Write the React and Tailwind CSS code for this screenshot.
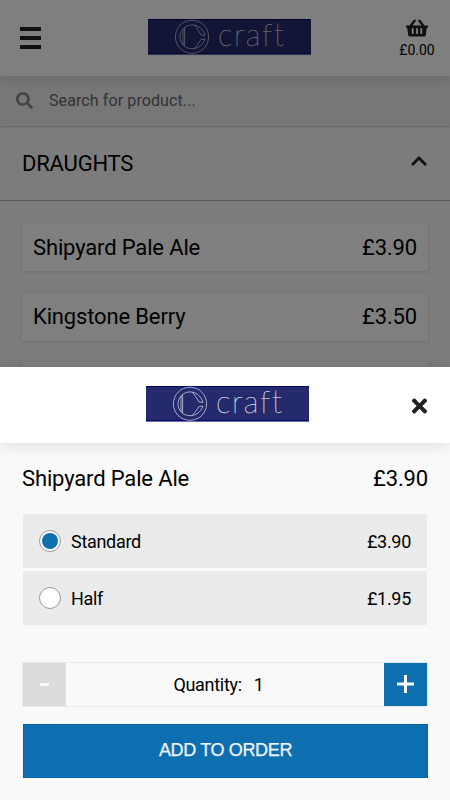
import React, { useState } from "react";
import { FaSearch, FaShoppingBasket, FaTimes, FaChevronUp } from "react-icons/fa";

const drinks = [
  { name: "Shipyard Pale Ale", price: "£3.90" },
  { name: "Kingstone Berry", price: "£3.50" },
  { name: "Aspall Cyder", price: "£3.90" },
];

const sizes = [
  { name: "Standard", price: "£3.90" },
  { name: "Half", price: "£1.95" },
];

const Logo = () => (
  <svg width="163" height="36" viewBox="0 0 163 36" overflow="visible" role="img" aria-label="craft">
    <rect width="163" height="36" fill="#242a6b" />
    <path d="M0 0.5H163M0 34.7H163" stroke="#02036b" fill="none" />
    <path d="M0 35.6H163" stroke="#8f92b8" strokeWidth="0.8" fill="none" />
    <g fill="none" stroke="#c9cae0" strokeWidth="0.8">
      <circle cx="44" cy="17.8" r="16.6" />
      <path d="M57 16.4C54.8 9.6 49.7 5.9 44 5.9C37.2 5.9 32 11.2 32 17.8S37.2 29.7 44 29.7C49.7 29.7 54.8 26 57 20.2L53 20.4C50.5 24.4 48.6 27 46.3 29.4M57 16.4L53 16C50.6 11.8 48.7 8.7 46.3 6.2M36.6 8.4V27.2M35 9.8V25.8" />
    </g>
    <text
      x="70"
      y="26.6"
      textLength="66"
      fill="#e3e4f0"
      stroke="#e3e4f0"
      strokeWidth="0.25"
      className="font-['Lato',sans-serif] font-thin text-[31px] [font-variant-ligatures:none]"
    >
      craft
    </text>
  </svg>
);

const Drink = ({ name, price }) => (
  <div className="flex h-[48px] shrink-0 items-center justify-between bg-white px-[11px] text-[22px] tracking-[-0.15px] shadow-[0_1px_4px_rgba(0,0,0,0.13)]">
    <span>{name}</span>
    <span>{price}</span>
  </div>
);

const App = () => {
  const [size, setSize] = useState("Standard");
  const [quantity, setQuantity] = useState(1);

  return (
    <div className="relative h-[800px] w-[450px] overflow-hidden bg-[#f9f9f9] font-['Roboto',sans-serif] text-black">
      {/* Menu page */}
      <header className="relative z-10 flex h-[76px] items-center justify-between bg-white pr-[15px] pl-[20px] shadow-[0_2px_14px_rgba(0,0,0,0.12)]">
        <div className="flex w-[40px] flex-col gap-[5px]">
          <span className="h-[4px] w-[21px] bg-[#222]" />
          <span className="h-[4px] w-[21px] bg-[#222]" />
          <span className="h-[4px] w-[21px] bg-[#222]" />
        </div>
        <div className="mb-[3px]">
          <Logo />
        </div>
        <div className="flex w-[36px] flex-col items-center pt-px">
          <FaShoppingBasket className="h-[20px] w-[22px] text-[#222]" />
          <span className="mt-[3px] text-[14px] leading-[18px]">£0.00</span>
        </div>
      </header>

      <div className="flex h-[50px] items-center bg-[#efefef] pl-[16px] shadow-[0_1px_2px_rgba(0,0,0,0.2)]">
        <FaSearch className="mb-px h-[17px] w-[17px] text-[#888]" />
        <span className="ml-[16px] text-[16px] tracking-[0.1px] text-[#666]">Search for product...</span>
      </div>

      <div className="flex h-[75px] items-center justify-between border-b border-[#a8a8a8] px-[22px]">
        <span className="text-[22px] tracking-[-0.2px]">DRAUGHTS</span>
        <FaChevronUp className="mb-[4px] h-[18px] w-[18px] text-[#222]" />
      </div>

      <div className="flex flex-col gap-[21.5px] px-[22px] pt-[22px]">
        {drinks.map((drink) => (
          <Drink key={drink.name} {...drink} />
        ))}
      </div>

      {/* Backdrop and order sheet */}
      <div className="absolute inset-0 z-20 flex flex-col justify-end bg-black/50">
        <div className="flex h-[433px] flex-col bg-[#f9f9f9]">
          <div className="flex h-[76px] shrink-0 items-center justify-between bg-white pr-[22px] pl-[146px] shadow-[0_2px_14px_rgba(0,0,0,0.12)]">
            <div className="mb-[2px]">
              <Logo />
            </div>
            <button aria-label="Close" className="pt-px">
              <FaTimes className="h-[22px] w-[17px] text-[#222]" />
            </button>
          </div>

          <div className="flex flex-col px-[22px] pt-[20px]">
            <div className="flex h-[30px] items-center justify-between text-[22px] tracking-[-0.15px]">
              <span>Shipyard Pale Ale</span>
              <span>£3.90</span>
            </div>

            <div className="mt-[21px] mr-px ml-px flex flex-col gap-[3px]">
              {sizes.map((item) => (
                <button
                  key={item.name}
                  onClick={() => setSize(item.name)}
                  className="flex h-[54px] items-center bg-[#ebebeb] px-[16px] text-[18px] tracking-[-0.3px]"
                >
                  <span className="flex h-[22px] w-[22px] items-center justify-center rounded-full border border-[#999] bg-white">
                    {size === item.name && <span className="h-[16px] w-[16px] rounded-full bg-[#0e6fb0]" />}
                  </span>
                  <span className="ml-[10px]">{item.name}</span>
                  <span className="ml-auto">{item.price}</span>
                </button>
              ))}
            </div>

            <div className="mt-[37px] flex h-[45px] border border-[#e9e9e9] text-[18px] tracking-[-0.3px]">
              <button
                aria-label="Remove one"
                onClick={() => setQuantity(Math.max(1, quantity - 1))}
                className="flex w-[43px] items-center justify-center bg-[#dcdcdc]"
              >
                <span className="h-[3px] w-[9px] bg-[#f9f9f9]" />
              </button>
              <div className="flex flex-1 items-center justify-center gap-[12px] pr-[13px]">
                <span>Quantity:</span>
                <span>{quantity}</span>
              </div>
              <button
                aria-label="Add one"
                onClick={() => setQuantity(quantity + 1)}
                className="flex w-[43px] items-center justify-center bg-[#0e6fb0]"
              >
                <svg width="17" height="18" viewBox="0 0 17 18" stroke="#f9f9f9" strokeWidth="3" className="mb-[2px]">
                  <path d="M0 9H17M8.5 0V18" />
                </svg>
              </button>
            </div>

            <button className="mt-[17px] ml-px h-[54px] border border-[#0a61ab] bg-[#0e6fb0] pb-px font-['Liberation_Sans',sans-serif] text-[18px] tracking-[-0.35px] text-[#f4f4f8] [-webkit-text-stroke:0.25px_#f4f4f8]">
              ADD TO ORDER
            </button>
          </div>
        </div>
      </div>
    </div>
  );
};

export default App;
